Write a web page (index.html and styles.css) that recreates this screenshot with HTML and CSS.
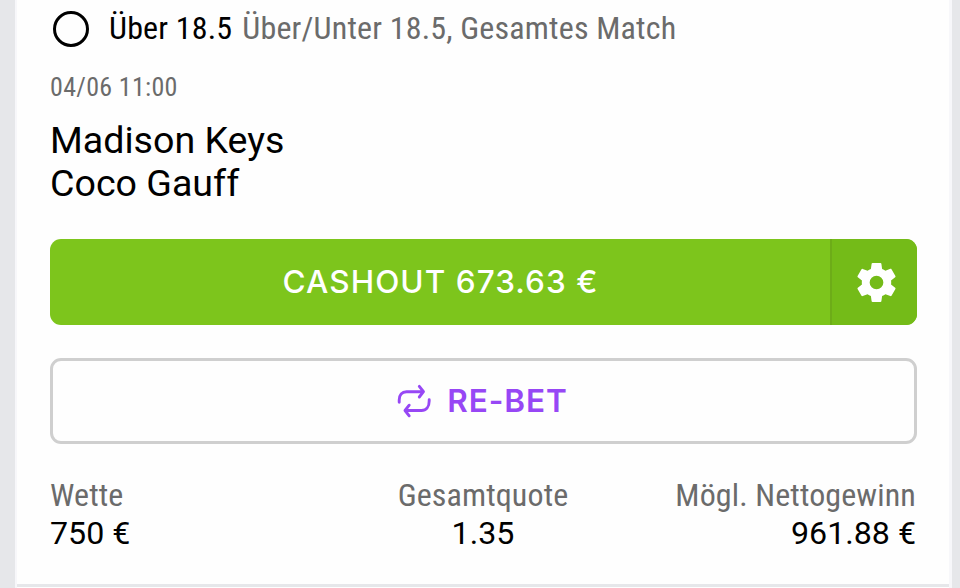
FILE: index.html
```html
<!DOCTYPE html>
<html lang="de">
<head>
<meta charset="utf-8">
<title>Cashout</title>
<link rel="stylesheet" href="styles.css">
</head>
<body>
<main class="card">
  <div class="selection">
    <span class="radio"></span>
    <span class="pick">Über 18.5</span>
    <span class="market">Über/Unter 18.5, Gesamtes Match</span>
  </div>
  <div class="date"><span>04/06 11:00</span></div>
  <div class="players"><div class="home">Madison Keys</div><div class="away">Coco Gauff</div></div>
  <div class="cashout">
    <div class="cashout-main"><span>CASHOUT 673.63 €</span></div>
    <div class="cashout-settings">
      <svg width="47" height="47" viewBox="0 0 24 24" fill="#fff"><path d="M19.5 12c0-.34-.03-.66-.07-1l2.11-1.65c.19-.15.24-.42.12-.64l-2-3.46c-.12-.22-.39-.3-.61-.22l-2.49 1c-.52-.4-1.08-.73-1.69-.98l-.38-2.65A.49.49 0 0 0 14 2h-4c-.25 0-.46.18-.49.42l-.38 2.65c-.61.25-1.17.59-1.69.98l-2.49-1c-.23-.09-.49 0-.61.22l-2 3.46c-.13.22-.07.49.12.64L4.57 11c-.04.34-.07.67-.07 1s.03.65.07.97l-2.11 1.66c-.19.15-.25.42-.12.64l2 3.46c.12.22.39.3.61.22l2.49-1.01c.52.4 1.08.73 1.69.98l.38 2.65c.03.24.24.43.49.43h4c.25 0 .46-.19.49-.43l.38-2.65c.61-.25 1.17-.58 1.69-.98l2.49 1.01c.23.08.49 0 .61-.22l2-3.46c.12-.22.07-.49-.12-.64l-2.11-1.66c.04-.32.07-.64.07-.97zM12 15.5a3.5 3.5 0 1 1 0-7 3.5 3.5 0 0 1 0 7z"/></svg>
    </div>
  </div>
  <div class="rebet">
    <svg width="34" height="34" viewBox="0 0 34 34" fill="none" stroke="#9747f5" stroke-width="2.9" stroke-linecap="round" stroke-linejoin="round"><path d="M2.2 18.3V16C2.2 11 5 7.700 9.500 7.700H26M22.300 2.400L26.500 7.700L22.300 13M32.200 15.700V17C32.200 23 29 26.500 24.500 26.500H8.300M12.200 21.200L8 26.500L12.200 31.800"/></svg>
    <span>RE-BET</span>
  </div>
  <div class="totals">
    <div class="total"><div class="label">Wette</div><div class="value">750 €</div></div>
    <div class="total center"><div class="label">Gesamtquote</div><div class="value">1.35</div></div>
    <div class="total right"><div class="label">Mögl. Nettogewinn</div><div class="value">961.88 €</div></div>
  </div>
</main>
</body>
</html>
```
FILE: styles.css
```css
* { box-sizing: border-box; }
body {
  margin: 0;
  height: 588px;
  overflow: hidden;
  background: #e6e7ea;
  padding: 0 8px 0 15px;
  font-family: Roboto, sans-serif;
  color: #000;
}
.card {
  height: 588px;
  background: #fefefe;
  border: solid #f7f7fa;
  border-width: 0 3px 0 2px;
  padding: 0 32px 0 33px;
  box-shadow: inset 0 -1px #fefefe, inset 0 -4px #e6e7ea;
}
.selection, .date, .label {
  font-family: "Roboto Condensed", Roboto, sans-serif;
  font-stretch: 75%;
  white-space: nowrap;
}
.selection {
  display: flex;
  align-items: center;
  height: 58px;
  padding-left: 3px;
  font-size: 32px;
}
.radio {
  width: 36px;
  height: 36px;
  border: 3px solid #000;
  border-radius: 50%;
  margin-right: 20px;
}
.pick, .market { line-height: 38px; padding-bottom: 2px; }
.pick { margin-right: 10px; letter-spacing: .18px; }
.market { letter-spacing: .18px; }
.market, .date, .label { color: #6b6b6b; }
.date { height: 60px; line-height: 58px; font-size: 26px; letter-spacing: .3px; }
.players { font-size: 37.6px; line-height: 43px; height: 121px; padding-top: 1px; }
.cashout {
  display: flex;
  height: 86px;
  border-radius: 11px;
  overflow: hidden;
  background: #7dc51c;
  color: #fff;
}
.cashout-main {
  flex: 1;
  display: flex;
  align-items: center;
  justify-content: center;
  padding: 0 0 2px 1px;
  font: 500 31.5px Inter, sans-serif;
  letter-spacing: 1.05px;
}
.cashout-settings {
  width: 87px;
  border-left: 2px solid #6dac18;
  background: #74bb18;
  display: flex;
  align-items: center;
  justify-content: center;
  padding-left: 3px;
}
.rebet {
  display: flex;
  align-items: center;
  justify-content: center;
  gap: 16px;
  height: 86px;
  margin-top: 33px;
  padding: 0 2px 2px 0;
  border: 3px solid #cfcfcf;
  border-radius: 11px;
  color: #9747f5;
  font: 600 31.5px Inter, sans-serif;
  letter-spacing: .9px;
}
.rebet svg { position: relative; top: 1px; }
.totals { display: grid; grid-template-columns: 1fr 1fr 1fr; margin: 32px 1px 0 0; }
.label { font-size: 32px; line-height: 38px; letter-spacing: .12px; }
.value { font-size: 32.2px; line-height: 38px; }
.center { text-align: center; }
.right { text-align: right; }
```
